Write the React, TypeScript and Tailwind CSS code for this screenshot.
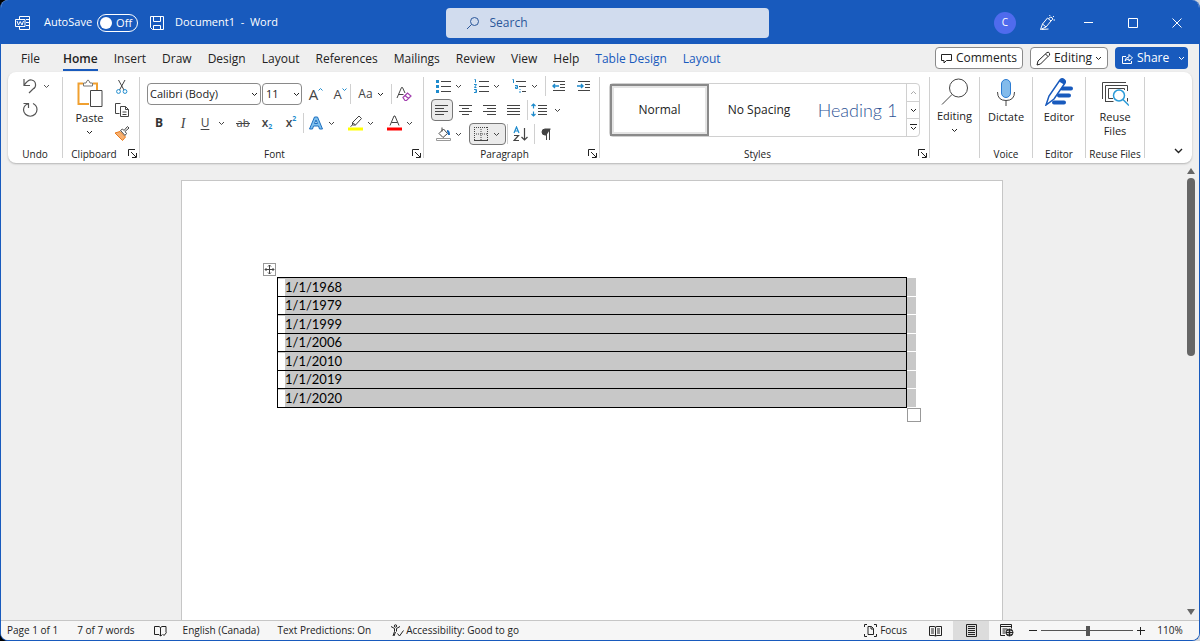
import { useState } from 'react'
import type { ReactNode } from 'react'

const tabs = [
  'File', 'Home', 'Insert', 'Draw', 'Design', 'Layout', 'References',
  'Mailings', 'Review', 'View', 'Help', 'Table Design', 'Table Layout',
]
const dates = ['1/1/1968', '1/1/1979', '1/1/1999', '1/1/2006', '1/1/2010', '1/1/2019', '1/1/2020']

type IconProps = { children: ReactNode; w?: number; h?: number; className?: string }

const Icon = ({ children, w = 16, h = 16, className = '' }: IconProps) => (
  <svg
    width={w}
    height={h}
    viewBox={`0 0 ${w} ${h}`}
    fill="none"
    stroke="currentColor"
    aria-hidden="true"
    className={`shrink-0 ${className}`}
  >
    {children}
  </svg>
)

const Chevron = ({ className = '' }: { className?: string }) => (
  <Icon w={7} h={5} className={className}>
    <path d="M1 1l2.500 2.500L6 1" />
  </Icon>
)

const Sep = () => <span className="h-5 w-px shrink-0 bg-[#d0d0d0]" />
const Divider = () => <div className="my-[5px] w-px shrink-0 bg-[#d0d0d0]" />

const Btn = ({ label, children, className = 'w-6' }: { label: string; children: ReactNode; className?: string }) => (
  <button aria-label={label} className={`flex h-full shrink-0 items-center justify-center ${className}`}>
    {children}
  </button>
)

// icon with a small drop-down arrow beside it
const Split = ({ label, children, on = false }: { label: string; children: ReactNode; on?: boolean }) => (
  <button
    aria-label={label}
    className={`flex h-full w-[37px] shrink-0 items-center ${on ? 'rounded border border-[#777] bg-[#ebebeb] pl-[2px]' : 'pl-[3px]'}`}
  >
    <span className="flex w-[18px] justify-center">{children}</span>
    <Chevron className="ml-[3px]" />
  </button>
)

const Launcher = ({ label }: { label: string }) => (
  <button aria-label={label} className="absolute right-[2px] bottom-[5px]">
    <Icon w={9} h={9}>
      <path d="M.5 7V.5H7M3 3l5 5M8.500 4v4.500H4" />
    </Icon>
  </button>
)

const Group = ({ name, children, className, launcher }: { name?: string; children: ReactNode; className: string; launcher?: boolean }) => (
  <section aria-label={name} className={`relative flex shrink-0 flex-col ${className}`}>
    <div className="flex-1">{children}</div>
    <div className={`mb-px h-4 text-center text-[10px] leading-4 whitespace-nowrap ${launcher ? 'pr-[14px]' : ''}`}>{name}</div>
    {launcher && <Launcher label={`${name} settings`} />}
  </section>
)

const BigButton = ({ label, children }: { label: string; children: ReactNode }) => (
  <button className="flex w-full flex-col items-center pt-[6px] text-[11px] leading-[14px]">
    {children}
    <span className="mt-1">{label}</span>
  </button>
)

const lines = (rows: [number, number][]) => rows.map(([a, b], i) => <path key={i} d={`M${a} ${2.5 + i * 3}H${b}`} />)

const TitleBar = () => (
  <header className="flex h-11 shrink-0 items-center bg-[#185abd] pt-px pl-[14px] text-[11px] text-white">
    <div className="flex flex-1 items-center">
      <Icon>
        <path d="M4.500 4V1.500h10v13h-10V12M11 4.500h3.500M11 7.500h3.500M11 10.500h3.500" />
        <path d="M.5 4.500h9.500v7H.5z" />
        <path d="M2 6l1.500 4L5.200 6.500l1.800 3.500L8.500 6" />
      </Icon>
      <label htmlFor="autosave" className="ml-[13px]">AutoSave</label>
      <span className="relative ml-[5px] h-[18px] w-[41px]">
        <input id="autosave" type="checkbox" role="switch" className="block h-[18px] w-[41px] appearance-none rounded-full border border-white" />
        <span className="pointer-events-none absolute top-[3px] left-[3px] size-3 rounded-full bg-white" />
        <span className="pointer-events-none absolute top-0 right-[6px] leading-[18px]">Off</span>
      </span>
      <button aria-label="Save" className="ml-[11px]">
        <Icon>
          <path d="M1.500 1.500h13v13h-11l-2-2zM4.500 1.500v5h7v-5M4.500 14.500v-4h7v4" />
        </Icon>
      </button>
      <span className="ml-[10px] whitespace-pre">Document1  -  Word</span>
    </div>
    <div className="flex h-[30px] w-[323px] items-center rounded bg-[#d1dcee] pl-5 text-[#2b579a]">
      <Icon w={14} h={14}>
        <circle cx="8.500" cy="5.500" r="4" />
        <path d="M5.500 8.500L1 13" />
      </Icon>
      <input aria-label="Search" placeholder="Search" className="ml-[10px] flex-1 bg-transparent text-[12px] outline-none placeholder:text-[#2b579a]" />
    </div>
    <div className="flex h-full flex-1 items-center justify-end">
      <Btn label="Account" className="w-11">
        <span className="flex size-[22px] items-center justify-center rounded-full bg-[#4f6bed] text-[10px]">C</span>
      </Btn>
      <Btn label="Coming soon" className="w-10">
        <Icon>
          <path d="M8.500 3l3.500 3-5 6-5.500 2.500L3.500 9zM3.500 9L7 12M2.500 14.500l7-.500M9.500 4Q11 1 13 2.500T12 6M11 1l-.500-1M14 2l1-1M14.500 5h1.500" />
        </Icon>
      </Btn>
      <Btn label="Minimize" className="w-11">
        <Icon w={10} h={10}><path d="M0 4.500h9" /></Icon>
      </Btn>
      <Btn label="Maximize" className="w-11">
        <Icon w={10} h={10}><path d="M.5.5h9v9H.5z" /></Icon>
      </Btn>
      <Btn label="Close" className="w-11">
        <Icon w={10} h={10}><path d="M.5.5l9 9M9.500.5l-9 9" /></Icon>
      </Btn>
    </div>
  </header>
)

const TabBar = () => (
  <div className="flex h-7 shrink-0 items-center justify-between pr-[11px] pl-3 text-[12px]">
    <nav className="flex pt-1">
      {tabs.map(tab => (
        <a
          key={tab}
          href="#"
          className={`px-2 leading-5 whitespace-nowrap ${tab === 'File' ? 'mr-[7px]' : ''} ${tab.startsWith('Table') ? 'text-[#185abd]' : ''} ${tab === 'Home' ? 'font-semibold' : ''}`}
        >
          <span className={tab === 'Home' ? 'block border-b-2 border-[#185abd]' : 'block border-b-2 border-transparent'}>
            {tab === 'Table Layout' ? 'Layout' : tab}
          </span>
        </a>
      ))}
    </nav>
    <div className="flex gap-[7px] whitespace-nowrap">
      <button className="flex h-[22px] w-[88px] items-center justify-center gap-1 rounded border border-[#8a8a8a] bg-white">
        <Icon w={11} h={11}><path d="M.5 1.500h10v6h-5l-2.500 2.500V7.500H.5z" /></Icon>
        Comments
      </button>
      <button className="flex h-[22px] w-[78px] items-center justify-center gap-[3px] rounded border border-[#8a8a8a] bg-white">
        <Icon w={15} h={15}><path d="M1 14l1-4L11 1.500q2-1 2.500 1t-.5 2L4.500 13zM9.500 3l2.500 2.500" /></Icon>
        Editing
        <Chevron />
      </button>
      <button className="flex h-[22px] w-[73px] items-center rounded bg-[#185abd] pl-[7px] text-white">
        <Icon w={11} h={11}><path d="M4 3.500H.5v7h9V8M3 8q.5-4 4-4V1.500L10.500 5 7 8V6Q4.500 6 3 8z" /></Icon>
        <span className="ml-1">Share</span>
        <Chevron className="ml-[9px]" />
      </button>
    </div>
  </div>
)

const FontGroup = () => (
  <Group name="Font" launcher className="w-[283px] px-[7px] pt-[11px]">
    <div className="flex h-[22px] items-center">
      <div className="relative">
        <select aria-label="Font" className="block h-[22px] w-[114px] appearance-none rounded border border-[#8a8a8a] bg-white pl-[2px] text-[11px]">
          <option>Calibri (Body)</option>
        </select>
        <Chevron className="pointer-events-none absolute top-[9px] right-[3px]" />
      </div>
      <div className="relative ml-px">
        <select aria-label="Font size" className="block h-[22px] w-[40px] appearance-none rounded border border-[#8a8a8a] bg-white pl-[3px] text-[11px]">
          <option>11</option>
        </select>
        <Chevron className="pointer-events-none absolute top-[9px] right-[2px]" />
      </div>
      <Btn label="Increase font size" className="w-6 pl-1">
        <span className="text-[15px] leading-5 text-[#444]">A</span>
        <Icon w={5} h={14} className="text-[#1e8bcd]"><path d="M.5 3.500l2-2 2 2" /></Icon>
      </Btn>
      <Btn label="Decrease font size" className="w-6 pl-1">
        <span className="text-[13px] leading-5 text-[#444]">A</span>
        <Icon w={5} h={14} className="text-[#1e8bcd]"><path d="M.5 1.500l2 2 2-2" /></Icon>
      </Btn>
      <Sep />
      <Btn label="Change case" className="w-10 gap-[4px]">
        <span className="text-[12px] text-[#444]">Aa</span>
        <Chevron />
      </Btn>
      <Sep />
      <Btn label="Clear formatting">
        <Icon className="text-[#444]">
          <path d="M1 12L5.500 1.500h1L9 7M2.500 8.500h5" />
          <path d="M7 11.500l4.500-4.500 3.500 3-4.500 4.500H9zM9 9.500l3.500 3" stroke="#a23fae" strokeWidth="1.200" />
        </Icon>
      </Btn>
    </div>
    <div className="mt-[7px] flex h-[22px] items-center text-[12px] text-[#444]">
      <Btn label="Bold"><b className="text-[#333]">B</b></Btn>
      <Btn label="Italic"><i className="font-['Liberation_Serif'] text-[14px]">I</i></Btn>
      <Btn label="Underline" className="w-9 gap-[9px]"><span className="underline underline-offset-2">U</span><Chevron /></Btn>
      <Btn label="Strikethrough">
        <span className="relative text-[11px] after:absolute after:top-1/2 after:-left-px after:h-px after:w-[14px] after:bg-[#444] after:content-['']">ab</span>
      </Btn>
      <Btn label="Subscript"><span className="font-semibold">x</span><span className="mt-2 text-[7px] font-bold text-[#1e8bcd]">2</span></Btn>
      <Btn label="Superscript"><span className="font-semibold">x</span><span className="mb-2 text-[7px] font-bold text-[#1e8bcd]">2</span></Btn>
      <Sep />
      <div className="flex h-full gap-[2px]">
        <Split label="Text effects">
          <Icon w={14} h={14}>
            <path d="M.5 13L5.500 1h3l5 12h-3L9.500 10h-5l-1 3zM5.500 7.500h3L7 4z" stroke="#1e6fbf" fill="#7fc0ee" />
          </Icon>
        </Split>
        <Split label="Highlight">
          <Icon w={15}>
            <path d="M4.500 7.500L11 1l2.500 2.500-6 6.500h-3zM4.500 7.500L7.500 10M4.500 10L2.500 11.500" />
            <path d="M0 14h15" stroke="#ff0" strokeWidth="3" />
          </Icon>
        </Split>
        <Split label="Font color">
          <Icon w={15}>
            <path d="M3 10.500L7 1h1l4 9.500M4.500 7.500h6" />
            <path d="M0 14h15" stroke="#f00" strokeWidth="3" />
          </Icon>
        </Split>
      </div>
    </div>
  </Group>
)

const ParagraphGroup = () => (
  <Group name="Paragraph" launcher className="w-[175px] pt-[3px]">
    <div className="flex flex-col gap-[2px] pl-[7px] text-[#444]">
      <div className="flex h-[22px] items-center gap-px">
        <Split label="Bullets">
          <Icon w={15} h={14}>
            <path d="M5 2.500h10M5 7.500h10M5 12.500h10" />
            <path d="M0 2.500h3M0 7.500h3M0 12.500h3" stroke="#1e8bcd" strokeWidth="3" />
          </Icon>
        </Split>
        <Split label="Numbering">
          <Icon w={15} h={14}>
            <path d="M5 2.500h10M5 7.500h10M5 12.500h10" />
            <path d="M.5.5h1v3M0 5.500h2.500L.5 8.500h2M0 10.500h2.500v3H0M1 12h1.500" stroke="#1e8bcd" />
          </Icon>
        </Split>
        <Split label="Multilevel list">
          <Icon w={14} h={14}>
            <path d="M4 2.500h10M7 7.500h7M10 12.500h4" />
            <path d="M.5.500h1v3.500M3 6.500h2.500v3H3.500V8h2M8 10v1M8 12v2" stroke="#1e8bcd" />
          </Icon>
        </Split>
        <Sep />
        <Btn label="Decrease indent">
          <Icon w={14} h={14}>
            <path d="M1 2.500h12M8 5.500h5M8 8.500h5M1 11.500h12" />
            <path d="M7 7H1M3 5L1 7l2 2" stroke="#1e8bcd" strokeWidth="1.400" />
          </Icon>
        </Btn>
        <Btn label="Increase indent">
          <Icon w={14} h={14}>
            <path d="M1 2.500h12M8 5.500h5M8 8.500h5M1 11.500h12" />
            <path d="M0 7h6M4 5l2 2-2 2" stroke="#1e8bcd" strokeWidth="1.400" />
          </Icon>
        </Btn>
      </div>
      <div className="flex h-[22px] items-center gap-[2px]">
        <Btn label="Align left" className="w-[22px] rounded border border-[#777] bg-[#ebebeb]">
          <Icon w={14} h={14}>{lines([[0, 13], [0, 9], [0, 13], [0, 9]])}</Icon>
        </Btn>
        <Btn label="Center" className="w-[22px]">
          <Icon w={14} h={14}>{lines([[0, 13], [3, 10], [0, 13], [3, 10]])}</Icon>
        </Btn>
        <Btn label="Align right" className="w-[22px]">
          <Icon w={14} h={14}>{lines([[0, 13], [4, 13], [0, 13], [4, 13]])}</Icon>
        </Btn>
        <Btn label="Justify" className="w-[22px]">
          <Icon w={14} h={14}>{lines([[0, 13], [0, 13], [0, 13], [0, 13]])}</Icon>
        </Btn>
        <Sep />
        <Split label="Line spacing">
          <Icon w={16} h={14} className="-ml-[6px]">
            <path d="M7 2.500h9M7 5.500h9M7 8.500h9M7 11.500h9" />
            <path d="M2.500 1v4.500M.5 3l2-2 2 2M2.500 8.500V13M.5 11l2 2 2-2" stroke="#1e8bcd" strokeWidth="1.200" />
          </Icon>
        </Split>
      </div>
      <div className="flex h-[22px] items-center gap-px">
        <Split label="Shading">
          <Icon w={15}>
            <path d="M3 7.500L7.500 3l4 4.500L7 11.500zM6 1.500v4" />
            <path d="M11 5q2 0 2 4" stroke="#1e6fbf" strokeWidth="2" />
            <path d="M.5 12.500h14v2H.5z" stroke="#999" />
          </Icon>
        </Split>
        <Split label="Borders" on>
          <Icon w={14} h={14}>
            <path d="M.5 0v13M13.500 0v13M0 .5h14M7 2v11M2 7h11" strokeDasharray="1 1" />
            <path d="M0 13.500h14" />
          </Icon>
        </Split>
        <Sep />
        <Btn label="Sort">
          <Icon>
            <path d="M1 7l2.500-6L6 7M2 5h3" stroke="#1e8bcd" strokeWidth="1.200" />
            <path d="M1 9.500h4.500L1 14.500h5M11.500 2v12M8.500 11l3 3 3-3" strokeWidth="1.200" />
          </Icon>
        </Btn>
        <Sep />
        <Btn label="Show formatting marks" className="w-6 pr-1">
          <Icon w={10} h={13}>
            <path d="M9.500 1H4a3 3 0 000 6h1.500" fill="currentColor" />
            <path d="M5.500 1v11M8.500 1v11" />
          </Icon>
        </Btn>
      </div>
    </div>
  </Group>
)

const StylesGroup = () => (
  <Group name="Styles" launcher className="w-[329px] px-[9px] pt-[11px]">
    <div className="flex h-[54px] rounded border border-[#d0d0d0] text-[12px]">
      <button className="w-[99px] border-2 border-[#8a8a8a] shadow-[inset_0_0_0_2px_#e4e4e4]">Normal</button>
      <button className="w-[100px]">No Spacing</button>
      <button className="flex-1 font-['Lato'] text-[18px] font-light text-[#2f5496]">Heading 1</button>
      <div className="flex w-[13px] flex-col divide-y divide-[#d0d0d0] border-l border-[#d0d0d0]">
        <Btn label="Previous styles" className="min-h-0 flex-1 text-[#aaa]"><Chevron className="rotate-180" /></Btn>
        <Btn label="Next styles" className="min-h-0 flex-1"><Chevron /></Btn>
        <Btn label="More styles" className="min-h-0 flex-1">
          <Icon w={7} h={7}><path d="M0 .5h7M1 3l2.500 2.500L6 3" /></Icon>
        </Btn>
      </div>
    </div>
  </Group>
)

const Ribbon = () => (
  <div className="mx-[7px] flex h-[91px] shrink-0 rounded-lg bg-white shadow-[0_1px_2px_rgba(0,0,0,0.25)]">
    <Group name="Undo" className="w-[54px] pt-[5px]">
      <div className="flex flex-col items-start gap-[6px] pl-[14px] text-[#555]">
        <button aria-label="Undo" className="flex items-center gap-[4px]">
          <Icon w={17} h={18}><path d="M2 2v6.500h6M2 8.500q4-6 7.500-5.500t4 4-2.500 5L7 16" strokeWidth="1.200" /></Icon>
          <Chevron />
        </button>
        <button aria-label="Repeat">
          <Icon w={17} h={17}><path d="M1.500 2.500h5V7M6.500 2.500Q2 4 1.500 8.500a6.500 6.500 0 0013.500 0q0-4-4-6" strokeWidth="1.200" /></Icon>
        </button>
      </div>
    </Group>
    <Divider />
    <Group name="Clipboard" launcher className="w-[76px] pt-[7px]">
      <div className="flex">
        <button className="flex w-[51px] flex-col items-center pl-[2px] text-[11px] leading-[14px]">
          <Icon w={27} h={29}>
            <path d="M7 4.500H2.500V25H13M17 4.500h4V11" stroke="#f0a030" strokeWidth="2" />
            <path d="M7.500 7V4H10q1-3 2-3t2 3h2.500v3z" stroke="#777" fill="#fff" />
            <path d="M14.500 11.500h11.500v16H14.500z" stroke="#444" fill="#fff" />
          </Icon>
          <span className="mt-[3px]">Paste</span>
          <Chevron className="mt-[5px]" />
        </button>
        <div className="flex flex-col items-center gap-[7px] text-[#444]">
          <button aria-label="Cut">
            <Icon>
              <path d="M4.500 1l5.500 10M11 1L5.500 11" />
              <circle cx="4.500" cy="12.500" r="1.900" stroke="#1e8bcd" />
              <circle cx="11" cy="12.500" r="1.900" stroke="#1e8bcd" />
            </Icon>
          </button>
          <button aria-label="Copy">
            <Icon>
              <path d="M5.500 11.500H1.500v-10h5M6.500 4.500h5l3 3v7h-8zM11.500 4.500v3h3M8.500 10h4M8.500 12.500h4" />
            </Icon>
          </button>
          <button aria-label="Format painter">
            <Icon>
              <path d="M1 8l5-1.500 5.500 5.500-3 3.500z" stroke="#e87a1d" fill="#f7b070" />
              <path d="M6.500 5.500l2-1.500 1.500 1.500 3.500-4L15 3l-4 3.500 1.500 2-1.500 2z" fill="#fff" />
            </Icon>
          </button>
        </div>
      </div>
    </Group>
    <Divider />
    <FontGroup />
    <Divider />
    <ParagraphGroup />
    <Divider />
    <StylesGroup />
    <Divider />
    <Group className="w-[49px]">
      <button className="flex w-full flex-col items-center pt-[6px] text-[11px] leading-[14px]">
        <Icon w={28} h={27} className="text-[#444]">
          <circle cx="17.500" cy="10" r="9" />
          <path d="M11 16.500L1 26.500" />
        </Icon>
        <span className="mt-1">Editing</span>
        <Chevron className="mt-[5px]" />
      </button>
    </Group>
    <Divider />
    <Group name="Voice" className="w-[52px]">
      <BigButton label="Dictate">
        <Icon w={20} h={28}>
          <rect x="5.500" y="1.500" width="9" height="18" rx="4.500" fill="#83bbeb" stroke="#2b7cd3" />
          <path d="M1.500 14q0 8.500 8.500 8.500t8.500-8.500M10 22.500V28" stroke="#444" />
        </Icon>
      </BigButton>
    </Group>
    <Divider />
    <Group name="Editor" className="w-[52px]">
      <BigButton label="Editor">
        <Icon w={28} h={28}>
          <path d="M17 10.500h9M14 17.500h10M9 24.500h10" stroke="#185abd" strokeWidth="4" strokeLinecap="round" />
          <path d="M1 27l3-9L15 2q2-2 4-.500t1 3.500L9 21z" fill="#fff" stroke="#185abd" strokeWidth="1.500" />
          <path d="M14 3.500Q16.500 0 19 1.500T20 5l-1 1.500z" fill="#185abd" stroke="none" />
        </Icon>
      </BigButton>
    </Group>
    <Divider />
    <Group name="Reuse Files" className="w-[58px]">
      <button className="flex w-full flex-col items-center pt-[6px] text-[11px] leading-[14px]">
        <Icon w={28} h={28}>
          <path d="M1.500 21V4.500H25M4.500 24V7.500h22V13M4.500 23.500h8M7.500 20.500v-10h16V12M7.500 20.500H12M26.500 20v3.500" stroke="#444" />
          <circle cx="18" cy="17.500" r="5.500" stroke="#2b9bd8" fill="#fff" strokeWidth="1.500" />
          <path d="M22 21.500l6 6" stroke="#2b9bd8" strokeWidth="1.500" />
        </Icon>
        <span className="mt-1 w-10">Reuse Files</span>
      </button>
    </Group>
    <Divider />
    <div className="flex flex-1 items-end justify-end pr-[9px] pb-[9px]">
      <button aria-label="Collapse ribbon">
        <Icon w={9} h={6}><path d="M1 1l3.500 3.500L8 1" strokeWidth="1.400" /></Icon>
      </button>
    </div>
  </div>
)

const DocumentArea = () => (
  <main className="flex min-h-0 flex-1">
    <div className="flex flex-1 justify-center pt-[17px]">
      <div className="w-[822px] border border-b-0 border-[#c6c6c6] bg-white px-[95px] pt-24">
        <div className="relative">
          <button aria-label="Move table" className="absolute -top-[14px] -left-[14px] border border-[#999] bg-white">
            <Icon w={11} h={11} className="text-[#444]">
              <path d="M5.500 1v9M1 5.500h9M4 2.500L5.500 1 7 2.500M4 8.500L5.500 10 7 8.500M2.500 4L1 5.500 2.500 7M8.500 4L10 5.500 8.500 7" />
            </Icon>
          </button>
          <table className="-mr-[9px] w-[calc(100%+9px)] border-separate border-spacing-0 font-['Lato'] text-[13px] text-black">
            <tbody>
              {dates.map(date => (
                <tr key={date} className="group first:h-5! odd:h-[19px] even:h-[18px]">
                  <td className="border-x border-b border-black bg-[#c8c8c8] p-0 leading-[17px] group-first:border-t">
                    <span className="block border-l-[7px] border-white">{date}</span>
                  </td>
                  <td className="w-[9px] border-b border-white bg-[#c8c8c8] p-0 group-first:border-t" />
                </tr>
              ))}
            </tbody>
          </table>
          <span className="absolute -right-[14px] -bottom-[14px] size-[14px] border border-[#999] bg-white" />
        </div>
      </div>
    </div>
    <div className="flex w-4 flex-col items-center pt-[5px] pb-[5px] text-[#666]">
      <Icon w={8} h={6}><path d="M4 0l4 6H0z" fill="currentColor" stroke="none" /></Icon>
      <div className="mt-1 h-[178px] w-2 rounded-full bg-[#666]" />
      <Icon w={8} h={6} className="mt-auto"><path d="M0 0h8L4 6z" fill="currentColor" stroke="none" /></Icon>
    </div>
  </main>
)

const StatusBar = () => {
  const [zoom, setZoom] = useState(110)

  return (
    <footer className="flex h-5 shrink-0 items-center border-t border-[#c6c6c6] bg-[#f6f6f6] pl-[6px] text-[10px] whitespace-nowrap text-[#222]">
      <button>Page 1 of 1</button>
      <button className="ml-[19px]">7 of 7 words</button>
      <button aria-label="Proofing" className="ml-[19px]">
        <Icon w={13} h={12}><path d="M6.500 2.500L5 1.500H.5v8H5l1.500 1.500 1.500-1M6.500 2.500V11M6.500 2.500L8 1.500h4v6M8.500 9l1.500 1.500 2.500-3" /></Icon>
      </button>
      <button className="ml-4">English (Canada)</button>
      <button className="ml-[18px]">Text Predictions: On</button>
      <button className="ml-[19px] flex items-center gap-[2px]">
        <Icon w={14} h={13}>
          <circle cx="5.500" cy="2" r="1.200" />
          <path d="M1 2.500l3.500 2V7.500L3 12M10 2.500l-3.500 2v3M5.500 8L4 12M7.500 9.500L9.500 12l4-5.500" />
        </Icon>
        Accessibility: Good to go
      </button>
      <div className="ml-auto flex h-full items-center">
        <button className="mr-[10px] flex items-center gap-[3px]">
          <Icon w={13} h={13}><path d="M3 .5H.5V3M10 .5h2.500V3M3 12.500H.5V10M10 12.500h2.500V10M4 2.500h3.500l2 2v6H4zM7 2.500v2.500h2.500" /></Icon>
          Focus
        </button>
        <Btn label="Read mode" className="w-9">
          <Icon w={13} h={12}><path d="M6.500 2L5 1.500H.5v9H5l1.500.5L8 10.500h4.500v-9H8zV11M2 4h3M2 6h3M2 8h3M8 4h3M8 6h3M8 8h3" /></Icon>
        </Btn>
        <Btn label="Print layout" className="w-9 bg-[#dcdcdc]">
          <Icon w={11} h={13}><path d="M.5.5h10v12H.5zM2 2.500h7M2 4.500h7M2 6.500h7M2 8.500h7M2 10.500h7" /></Icon>
        </Btn>
        <Btn label="Web layout" className="w-9">
          <Icon w={14} h={13}>
            <path d="M5 11.500H.5V.5h11v4M.5 2.500h11M2.500 5h5M2.500 7h3M2.500 9h3" />
            <circle cx="9.500" cy="8.500" r="3.500" fill="#f6f6f6" />
            <path d="M6 8.500h7M9.500 5v7M7 6.500q2.500 1 5 0M7 10.500q2.500-1 5 0" />
          </Icon>
        </Btn>
        <Btn label="Zoom out" className="w-4"><Icon w={8} h={8}><path d="M0 3.500h8" /></Icon></Btn>
        <input
          type="range"
          aria-label="Zoom"
          min={10}
          max={206}
          value={zoom}
          onChange={e => setZoom(Number(e.target.value))}
          className="h-3 w-[92px] appearance-none bg-[linear-gradient(#555,#555)] bg-[length:100%_1px] bg-center bg-no-repeat [&::-webkit-slider-thumb]:h-[10px] [&::-webkit-slider-thumb]:w-1 [&::-webkit-slider-thumb]:appearance-none [&::-webkit-slider-thumb]:bg-[#555]"
        />
        <Btn label="Zoom in" className="w-4"><Icon w={8} h={8}><path d="M0 3.500h8M3.500 0v8" /></Icon></Btn>
        <button className="w-[50px] pr-2 text-center">{zoom}%</button>
      </div>
    </footer>
  )
}

const App = () => (
  <div className="h-screen bg-linear-to-r from-black to-gray-300 font-['Open_Sans',sans-serif] text-[#222]">
    <div className="flex h-full flex-col overflow-hidden rounded-lg border border-t-0 border-[#185abd] bg-[#efefef]">
      <TitleBar />
      <TabBar />
      <Ribbon />
      <DocumentArea />
      <StatusBar />
    </div>
  </div>
)

export default App
